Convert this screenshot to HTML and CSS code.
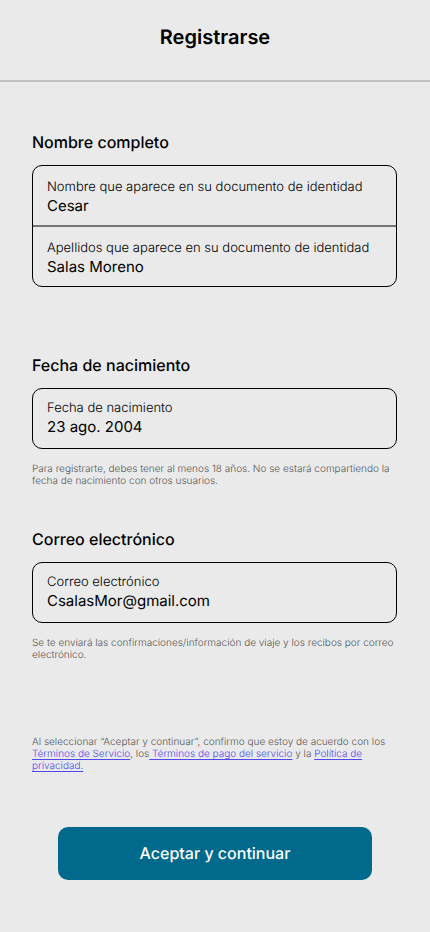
FILE: index.html
```html
<!DOCTYPE html>
<html lang="es">
<head>
<meta charset="utf-8">
<meta name="viewport" content="width=device-width, initial-scale=1">
<title>Registrarse</title>
<link rel="stylesheet" href="styles.css">
</head>
<body>
<header class="header">
  <h1 class="title">Registrarse</h1>
</header>
<form class="form">
  <section class="section-name">
    <h2 class="heading">Nombre completo</h2>
    <div class="box box-stacked">
      <div class="field">
        <label class="label" for="nombre">Nombre que aparece en su documento de identidad</label>
        <input class="input" id="nombre" type="text" value="Cesar">
      </div>
      <div class="field">
        <label class="label" for="apellidos">Apellidos que aparece en su documento de identidad</label>
        <input class="input" id="apellidos" type="text" value="Salas Moreno">
      </div>
    </div>
  </section>
  <section class="section-birth">
    <h2 class="heading">Fecha de nacimiento</h2>
    <div class="box">
      <div class="field">
        <label class="label" for="fecha">Fecha de nacimiento</label>
        <input class="input" id="fecha" type="text" value="23 ago. 2004">
      </div>
    </div>
    <p class="note">Para registrarte, debes tener al menos 18 años. No se estará compartiendo la fecha de nacimiento con otros usuarios.</p>
  </section>
  <section class="section-mail">
    <h2 class="heading">Correo electrónico</h2>
    <div class="box">
      <div class="field">
        <label class="label" for="correo">Correo electrónico</label>
        <input class="input" id="correo" type="email" value="CsalasMor@gmail.com">
      </div>
    </div>
    <p class="note">Se te enviará las confirmaciones/información de viaje y los recibos por correo electrónico.</p>
  </section>
  <p class="note terms">Al seleccionar “Aceptar y continuar”, confirmo que estoy de acuerdo con los <a class="link" href="#servicio">Términos de Servicio</a>, los<a class="link" href="#pago"> Términos de pago del servicio</a> y la <a class="link" href="#privacidad">Política de privacidad.</a></p>
  <button class="submit" type="submit">Aceptar y continuar</button>
</form>
</body>
</html>
```
FILE: styles.css
```css
* {
  box-sizing: border-box;
}

body {
  margin: 0;
  background: #eaeaea;
  color: #000;
  font-family: Inter, sans-serif;
  text-rendering: geometricPrecision;
}

.header {
  padding: 25px 32px 30px;
  border-bottom: 2px solid #c0c0c0;
}

.title {
  margin: 0;
  font-size: 20px;
  line-height: 25px;
  font-weight: 600;
  text-align: center;
}

.form {
  display: flex;
  flex-direction: column;
  padding: 50px 33px 52px 32px;
}

.section-name {
  margin-bottom: 68px;
}

.section-birth {
  margin-bottom: 42px;
}

.section-mail {
  margin-bottom: 75px;
}

.heading {
  margin: 0 0 13px;
  font-size: 16px;
  line-height: 20px;
  font-weight: 500;
}

.box {
  border: 1px solid #000;
  border-radius: 10px;
}

.field {
  display: flex;
  flex-direction: column;
  padding: 11px 14px;
}

.box-stacked .field {
  padding: 13px 14px 9px;
}

.field + .field {
  border-top: 2px solid #757575;
}

.label {
  font-size: 13px;
  line-height: 17px;
  font-weight: 300;
}

.input {
  width: 100%;
  height: 20px;
  padding: 0;
  border: 0;
  background: transparent;
  color: inherit;
  font-family: inherit;
  font-size: 15px;
  line-height: 20px;
  text-rendering: inherit;
}

.note {
  margin: 14px 0 0;
  color: #555;
  font-size: 10px;
  line-height: 12px;
  font-weight: 300;
}

.terms {
  margin: 0;
}

.link {
  color: #5048ee;
  text-decoration: underline 1px;
  text-decoration-skip-ink: none;
  text-underline-offset: 2px;
}

.submit {
  margin: 55px 25px 0 26px;
  padding: 16px;
  border: 0;
  border-radius: 10px;
  background: #00698c;
  color: #fff;
  font-family: inherit;
  font-size: 16px;
  line-height: 21px;
  font-weight: 500;
  text-rendering: inherit;
}
```
